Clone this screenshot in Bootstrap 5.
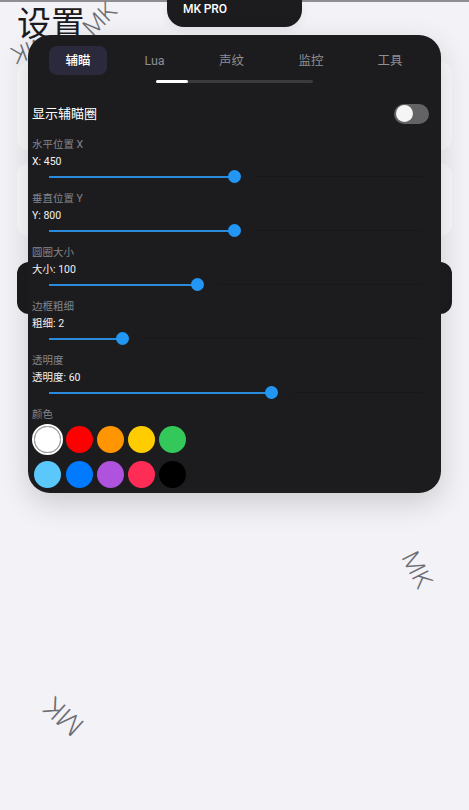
<!DOCTYPE html>
<html lang="zh">
<head>
<meta charset="utf-8">
<link rel="stylesheet" href="https://cdn.jsdelivr.net/npm/bootstrap@5.3.0/dist/css/bootstrap.min.css">
<style>
html,body{height:810px;overflow:hidden}
body{background:#f2f2f7;font-family:Roboto,"Noto Sans CJK SC",sans-serif;color:#fff;position:relative;width:469px}
.topline{height:2px;background:#8e8e93}
.page-title{position:absolute;left:17px;top:4px;font-size:34px;line-height:40px;color:#1c1c1e;font-weight:400;margin:0}
.notch{position:absolute;left:167px;top:0;width:135px;height:27px;background:#1c1c1e;border-radius:0 0 17px 17px;font-size:12px;font-weight:500;line-height:18px;padding-left:16px;letter-spacing:-.1px;box-shadow:0 4px 10px rgba(0,0,0,.06)}
.wm{position:absolute;font-size:26px;line-height:26px;font-weight:300;color:#6c6c71;white-space:nowrap}
.wm-a{left:82px;top:6px;font-size:24px;transform:rotate(-44deg)}
.wm-b{left:11px;top:37px;font-size:24px;transform:rotate(160deg)}
.wm-c{left:398px;top:557px;font-size:25px;transform:rotate(63deg)}
.wm-d{left:43px;top:703px;font-size:28px;transform:rotate(222deg)}
.back-a,.back-b,.back-c{position:absolute;left:17px;width:435px;border-radius:12px}
.back-a{top:62px;height:88px;background:#f9f9fb}
.back-b{top:163px;height:73px;background:#f9f9fb}
.back-c{top:262px;height:52px;background:#1c1c1e}
.panel{position:absolute;left:28px;top:35px;width:413px;height:458px;background:#1c1c1e;border-radius:22px;box-shadow:0 10px 30px rgba(0,0,0,.16);padding:0 12px 0 4px}
.tabbar{display:flex;height:29px;margin-top:11px;margin-left:17px}
.tab-item{flex:none;font-size:12.5px;line-height:29px;text-align:center;color:#8e8e93;border-radius:8px;white-space:nowrap}
.tab-item:nth-child(1){width:58px}
.tab-item:nth-child(2){width:95px}
.tab-item:nth-child(3){width:59px}
.tab-item:nth-child(4){width:100px}
.tab-item:nth-child(5){width:58px}
.tab-item.on{background:#2a2a3c;color:#fff;font-weight:500}
.indicator{width:157px;height:3px;background:#3a3a3c;margin:5px 0 0 124px;border-radius:2px}
.indicator-fill{width:32px;height:3px;background:#fff;border-radius:2px}
.toggle-row{display:flex;justify-content:space-between;align-items:center;margin-top:20px;height:21px;font-size:13px;line-height:21px}
.fake-toggle{width:35px;height:20px;border-radius:10px;background:#636366;position:relative}
.fake-toggle i{position:absolute;left:2px;top:1.5px;width:17px;height:17px;border-radius:50%;background:#f5f5f5}
.group-list{margin-top:13px}
.slide-group{height:54px;position:relative}
.slide-label{font-size:10.5px;line-height:16px;color:#85858a}
.slide-value{font-size:10.5px;line-height:16px;margin-top:1px;color:#f2f2f2}
.track{position:absolute;left:16.5px;width:372px;top:38.5px;height:3px}
.track-fill{height:2.5px;background:#2a8bdc}
.track-rest{position:absolute;right:0;top:0;height:1.5px;background:#18181a}
.thumb{position:absolute;top:-5.25px;width:13px;height:13px;margin-left:-6.5px;border-radius:50%;background:#2196f3}
.swatch-label{font-size:10.5px;line-height:16px;color:#85858a}
.swatches{display:flex;gap:4.2px;margin-top:3px;height:27px;padding-left:2.4px}
.swatches+.swatches{margin-top:8px}
.dot{width:27px;height:27px;border-radius:50%;flex:none}
.dot-sel{background:#fff;border:1px solid #aaa;outline:2px solid #fff}
</style>
</head>
<body>
<div class="topline"></div>
<span class="wm wm-a">MK</span>
<span class="wm wm-b">MK</span>
<span class="wm wm-c">MK</span>
<span class="wm wm-d">MK</span>
<h1 class="page-title">设置</h1>
<div class="back-a"></div>
<div class="back-b"></div>
<div class="back-c"></div>
<div class="notch">MK PRO</div>
<div class="panel">
  <div class="tabbar">
    <div class="tab-item on">辅瞄</div>
    <div class="tab-item">Lua</div>
    <div class="tab-item">声纹</div>
    <div class="tab-item">监控</div>
    <div class="tab-item">工具</div>
  </div>
  <div class="indicator"><div class="indicator-fill"></div></div>
  <div class="toggle-row"><span>显示辅瞄圈</span><span class="fake-toggle"><i></i></span></div>
  <div class="group-list">
    <div class="slide-group"><div class="slide-label">水平位置 X</div><div class="slide-value">X: 450</div><div class="track"><div class="track-fill" style="width:50%"></div><div class="track-rest" style="left:calc(50% + 20px)"></div><div class="thumb" style="left:50%"></div></div></div>
    <div class="slide-group"><div class="slide-label">垂直位置 Y</div><div class="slide-value">Y: 800</div><div class="track"><div class="track-fill" style="width:50%"></div><div class="track-rest" style="left:calc(50% + 20px)"></div><div class="thumb" style="left:50%"></div></div></div>
    <div class="slide-group"><div class="slide-label">圆圈大小</div><div class="slide-value">大小: 100</div><div class="track"><div class="track-fill" style="width:40%"></div><div class="track-rest" style="left:calc(40% + 20px)"></div><div class="thumb" style="left:40%"></div></div></div>
    <div class="slide-group"><div class="slide-label">边框粗细</div><div class="slide-value">粗细: 2</div><div class="track"><div class="track-fill" style="width:20%"></div><div class="track-rest" style="left:calc(20% + 20px)"></div><div class="thumb" style="left:20%"></div></div></div>
    <div class="slide-group"><div class="slide-label">透明度</div><div class="slide-value">透明度: 60</div><div class="track"><div class="track-fill" style="width:60%"></div><div class="track-rest" style="left:calc(60% + 20px)"></div><div class="thumb" style="left:60%"></div></div></div>
  </div>
  <div class="swatch-label">颜色</div>
  <div class="swatches">
    <span class="dot dot-sel"></span>
    <span class="dot" style="background:#ff0000"></span>
    <span class="dot" style="background:#ff9500"></span>
    <span class="dot" style="background:#ffcc00"></span>
    <span class="dot" style="background:#34c759"></span>
  </div>
  <div class="swatches">
    <span class="dot" style="background:#5ac8fa"></span>
    <span class="dot" style="background:#007aff"></span>
    <span class="dot" style="background:#af52de"></span>
    <span class="dot" style="background:#ff2d55"></span>
    <span class="dot" style="background:#000000"></span>
  </div>
</div>
<script src="https://cdn.jsdelivr.net/npm/bootstrap@5.3.0/dist/js/bootstrap.bundle.min.js"></script>
</body>
</html>
